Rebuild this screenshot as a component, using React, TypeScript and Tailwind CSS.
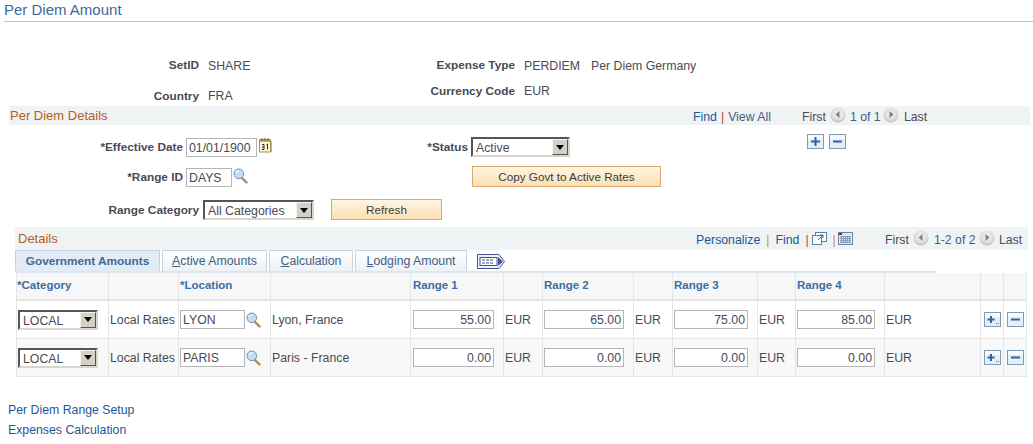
const T = "text-[#4a4a55]";
const B = "text-[11.8px] font-bold";

function Nav({ dir }: { dir: "l" | "r" }) {
  return (
    <svg width="16" height="16" viewBox="0 0 16 16" className="shrink-0">
      <defs>
        <radialGradient id={"n" + dir} cx="50%" cy="40%" r="60%">
          <stop offset="0" stopColor="#f4f4f4" />
          <stop offset="0.7" stopColor="#dddddd" />
          <stop offset="1" stopColor="#bdbdbd" />
        </radialGradient>
      </defs>
      <circle cx="8" cy="8" r="7.5" fill={"url(#n" + dir + ")"} />
      <path d={dir === "l" ? "M9.5 4v7L5.5 7.5z" : "M6.5 4v7l4-3.5z"} fill="#808080" />
    </svg>
  );
}

function Box({ kind, dots }: { kind: "+" | "-"; dots?: boolean }) {
  return (
    <svg width="17" height="15" viewBox="0 0 17 15" className="shrink-0">
      <rect x="0.5" y="0.5" width="16" height="14" fill="#e6eef5" stroke="#7e9db5" />
      <rect x="1" y="1" width="15" height="4" fill="#f7fafc" />
      {kind === "+" && <path d={dots ? "M3.5 7.5h7M7 4v7" : "M4 7.5h9M8.5 3v9"} stroke="#2b64a8" strokeWidth="2" />}
      {kind === "-" && <path d="M4 7.5h9" stroke="#2b64a8" strokeWidth="2" />}
      {dots && <path d="M12 11.5h1M14 11.5h1" stroke="#5b7f9f" />}
    </svg>
  );
}

function Search() {
  return (
    <svg width="15" height="16" viewBox="0 0 15 16" className="shrink-0">
      <path d="M8.5 9.5l5 5" stroke="#b08a50" strokeWidth="2.4" strokeLinecap="round" />
      <circle cx="5.8" cy="5.8" r="4.8" fill="#c5dcf2" stroke="#6c93b8" />
      <path d="M3 5a3 3 0 0 1 3-2.4" stroke="#ffffff" fill="none" />
    </svg>
  );
}

function Calendar() {
  return (
    <svg width="13" height="15" viewBox="0 0 13 15" className="shrink-0">
      <rect x="0.5" y="1.5" width="11" height="12.5" fill="#fff8d8" stroke="#a89250" />
      <rect x="1" y="2" width="10" height="2" fill="#c9a85a" />
      <path d="M3 0v3M6 0v3M9 0v3" stroke="#6f5c2a" />
      <path d="M12.5 3v11" stroke="#c9b377" />
      <path d="M3 6.5h2v5M3 9h2M3 11.5h2M7.5 6.5l1-.5v5.5" stroke="#303030" fill="none" strokeWidth="1" />
    </svg>
  );
}

function Select({ w, label }: { w: string; label: string }) {
  return (
    <div className={`flex h-[20px] shrink-0 items-stretch border-2 border-t-[#555] border-l-[#555] border-r-[#d8d5cc] border-b-[#d8d5cc] bg-white ${w}`}>
      <span className={`flex-1 pt-[2px] pl-[3px] text-[12.3px] leading-[14px] ${T}`}>{label}</span>
      <span className="flex w-[16px] items-center justify-center border border-b-[#555] border-r-[#555] border-t-[#f5f5f5] border-l-[#f5f5f5] bg-[#d4d0c8]">
        <svg width="8" height="5" viewBox="0 0 8 5"><path d="M0 0h8L4 5z" fill="#000" /></svg>
      </span>
    </div>
  );
}

function Input({ w, value, right }: { w: string; value: string; right?: boolean }) {
  return (
    <div className={`h-[19px] shrink-0 border border-[#b5b5b5] bg-white px-[2px] pt-[1px] text-[12.3px] leading-[16px] ${T} ${right ? "text-right" : ""} ${w}`}>
      {value}
    </div>
  );
}

function Btn({ w, label }: { w: string; label: string }) {
  return (
    <div className={`h-[21px] shrink-0 border border-[#dba86e] bg-gradient-to-b from-[#fff5e3] to-[#fbdfb4] text-center text-[11.7px] leading-[19px] text-[#3c3c3c] ${w}`}>
      {label}
    </div>
  );
}

function Sep({ c = "text-[#b5472f]" }: { c?: string }) {
  return <span className={c}>|</span>;
}

function Tab({ w, first, rest }: { w: string; first: string; rest: string }) {
  return (
    <div className={`flex h-[21px] shrink-0 items-center justify-center border border-b-0 border-[#c9d3dd] bg-gradient-to-b from-[#ffffff] to-[#edf2f7] pt-[1px] text-[12.3px] text-[#41607f] ${w}`}>
      <span className="underline">{first}</span>
      {rest}
    </div>
  );
}

function HeadCell({ children, pl = "pl-[1px]" }: { children?: React.ReactNode; pl?: string }) {
  return (
    <div className={`flex items-center border-r border-b-2 border-[#e6e6e6] bg-[#f7f7f7] pb-[1px] text-[11.5px] font-bold text-[#3a6ea5] ${pl}`}>
      {children}
    </div>
  );
}

function Row({ loc, desc, v, bg }: { loc: string; desc: string; v: string[]; bg: string }) {
  const c = `flex items-center border-r border-b border-[#e6e6e6] text-[12.3px] ${bg} ${T}`;
  const f = `${c} pl-[1px]`;
  const t = `${c} pl-[1px] pt-[1px]`;
  const b = `${c} pl-[3px]`;
  return (
    <>
      <div className={f}><Select w="w-[80px]" label="LOCAL" /></div>
      <div className={t}>Local Rates</div>
      <div className={`${f} gap-[1px]`}><Input w="w-[65px]" value={loc} /><Search /></div>
      <div className={t}>{desc}</div>
      <div className={`${c} pl-[2px]`}><Input w="w-[81px]" value={v[0]} right /></div>
      <div className={t}>EUR</div>
      <div className={f}><Input w="w-[80px]" value={v[1]} right /></div>
      <div className={t}>EUR</div>
      <div className={f}><Input w="w-[74px]" value={v[2]} right /></div>
      <div className={t}>EUR</div>
      <div className={f}><Input w="w-[78px]" value={v[3]} right /></div>
      <div className={t}>EUR</div>
      <div className={b}><Box kind="+" dots /></div>
      <div className={b}><Box kind="-" /></div>
    </>
  );
}

export default function App() {
  return (
    <div className="h-[444px] w-[1033px] overflow-hidden bg-white font-['Liberation_Sans',Arial,sans-serif] text-[12.3px]">
      <div className="ml-[4px] h-[22px] border-b border-[#c0c0c0] text-[15px] leading-[20px] text-[#3b6a9c]">Per Diem Amount</div>

      {/* Key fields */}
      <div className="mt-[34px] flex h-[20px] items-center">
        <div className={`w-[199px] text-right ${B} ${T}`}>SetID</div>
        <div className={`ml-[9px] w-[100px] ${T}`}>SHARE</div>
        <div className={`w-[207px] text-right ${B} ${T}`}>Expense Type</div>
        <div className={`ml-[9px] w-[67px] ${T}`}>PERDIEM</div>
        <div className={T}>Per Diem Germany</div>
      </div>
      <div className="mt-[5px] flex h-[25px] items-start">
        <div className={`mt-[5px] w-[199px] text-right leading-[20px] ${B} ${T}`}>Country</div>
        <div className={`mt-[5px] ml-[9px] w-[100px] leading-[20px] ${T}`}>FRA</div>
        <div className={`w-[207px] text-right leading-[20px] ${B} ${T}`}>Currency Code</div>
        <div className={`ml-[9px] leading-[20px] ${T}`}>EUR</div>
      </div>

      {/* Per Diem Details */}
      <div className="ml-[9px] flex h-[19px] w-[1021px] items-center bg-[#f0f3f4] pl-[1px]">
        <span className="w-[683px] text-[13px] text-[#b5601e]">Per Diem Details</span>
        <span className="mt-[4px] flex w-[109px] gap-[4px]">
          <span className="text-[#1f5596]">Find</span><Sep /><span className="text-[#3f5f85]">View All</span>
        </span>
        <span className={`flex items-center gap-[4px] ${T}`}>
          <span className="mt-[4px]">First</span>
          <span className="-mt-[2px]"><Nav dir="l" /></span>
          <span className="mt-[4px] w-[29px] whitespace-nowrap text-[#3f5f85]">1 of 1</span>
          <span className="-mt-[2px]"><Nav dir="r" /></span>
          <span className="mt-[4px] ml-[1px]">Last</span>
        </span>
      </div>

      <div className="mt-[9px] flex h-[24px] items-start">
        <div className={`mt-[4px] w-[183px] shrink-0 text-right leading-[19px] ${B} ${T}`}>*Effective Date</div>
        <div className="mt-[4px] ml-[3px] flex w-[85px] gap-[2px]"><Input w="w-[71px]" value="01/01/1900" /><Calendar /></div>
        <div className={`mt-[4px] w-[197px] text-right leading-[19px] ${B} ${T}`}>*Status</div>
        <div className="mt-[3px] ml-[3px]"><Select w="w-[99px]" label="Active" /></div>
        <div className="ml-[237px] flex gap-[5px]"><Box kind="+" /><Box kind="-" /></div>
      </div>
      <div className="mt-[8px] flex h-[21px] items-start">
        <div className={`mt-[2px] w-[183px] shrink-0 text-right leading-[19px] ${B} ${T}`}>*Range ID</div>
        <div className="mt-[2px] ml-[3px] flex w-[286px] gap-[1px]"><Input w="w-[46px]" value="DAYS" /><Search /></div>
        <Btn w="w-[189px]" label="Copy Govt to Active Rates" />
      </div>
      <div className="mt-[12px] flex h-[21px] items-start">
        <div className={`mt-[2px] w-[199px] shrink-0 text-right leading-[19px] ${B} ${T}`}>Range Category</div>
        <div className="mt-[1px] ml-[4px]"><Select w="w-[111px]" label="All Categories" /></div>
        <div className="ml-[17px]"><Btn w="w-[111px]" label="Refresh" /></div>
      </div>

      {/* Details */}
      <div className="mt-[7px] ml-[15px] flex h-[23px] w-[1013px] items-center bg-[#f0f3f4] pl-[3px]">
        <span className="w-[678px] text-[13px] text-[#b5601e]">Details</span>
        <span className="flex w-[189px] items-center gap-[6px] text-[#1f5596]">
          <span className="mt-[4px]">Personalize</span><span className="mt-[4px]"><Sep c="text-[#c08a3e]" /></span><span className="mt-[4px]">Find</span><span className="mt-[4px]"><Sep /></span>
          <svg width="15" height="13" viewBox="0 0 15 13" className="-mt-[1px] -ml-[3px] shrink-0" fill="none">
            <rect x="3.5" y="0.5" width="11" height="9" fill="#fff" stroke="#5f7f9f" />
            <rect x="0.5" y="3.5" width="9" height="9" fill="#fff" stroke="#5f7f9f" />
            <path d="M6 8l5-5M8 3h3v3" stroke="#40658a" />
          </svg>
          <span className="mt-[4px]"><Sep c="text-[#c08a3e]" /></span>
          <svg width="15" height="13" viewBox="0 0 15 13" className="-mt-[1px] -ml-[4px] shrink-0">
            <rect x="0.5" y="0.5" width="14" height="12" fill="#dfe6ee" stroke="#6f86a6" />
            <path d="M2 4.5h11M2 6.5h11M2 8.5h11M2 10.5h11M3.5 4v7M5.5 4v7M7.5 4v7M9.5 4v7M11.5 4v7" stroke="#8a9db5" strokeWidth="1" />
            <rect x="1" y="1" width="3" height="2" fill="#e00000" />
          </svg>
        </span>
        <span className={`flex items-center gap-[4px] ${T}`}>
          <span className="mt-[4px]">First</span>
          <span className="-mt-[2px]"><Nav dir="l" /></span>
          <span className="mt-[4px] ml-[1px] w-[41px] whitespace-nowrap text-[#3f5f85]">1-2 of 2</span>
          <span className="-mt-[2px]"><Nav dir="r" /></span>
          <span className="mt-[4px]">Last</span>
        </span>
      </div>

      <div className="ml-[15px] flex h-[23px] w-[921px] items-end gap-[2px] border-b-2 border-[#dce6f1]">
        <div className="flex h-[21px] w-[145px] shrink-0 items-center justify-center border border-b-0 border-[#c3d3e4] bg-[#e3ecf5] pt-[1px] text-[11.8px] font-bold text-[#3f6a96]">Government Amounts</div>
        <Tab w="w-[105px]" first="A" rest="ctive Amounts" />
        <Tab w="w-[84px]" first="C" rest="alculation" />
        <Tab w="w-[112px]" first="L" rest="odging Amount" />
        <svg width="28" height="15" viewBox="0 0 28 15" className="mb-[2px] ml-[8px] shrink-0">
          <path d="M0.5 0.5H22L27.5 7.5 22 14.5H0.5z" fill="#eef3fa" stroke="#42528f" />
          <rect x="3" y="3.5" width="17" height="8" fill="#fff" stroke="#42528f" />
          <path d="M5 6h12M5 9h12" stroke="#42528f" strokeDasharray="3 1" />
          <path d="M21 3l5 4.5-5 4.5z" fill="#42528f" />
        </svg>
      </div>

      <div className="ml-[16px] grid h-[104px] w-[1011px] grid-cols-[92px_70px_92px_140px_93px_39px_91px_39px_85px_38px_89px_96px_23px_23px] grid-rows-[28px_38px_38px] border-l border-[#e6e6e6]">
        <HeadCell pl="pl-0">*Category</HeadCell>
        <HeadCell />
        <HeadCell>*Location</HeadCell>
        <HeadCell />
        <HeadCell pl="pl-[2px]">Range 1</HeadCell>
        <HeadCell />
        <HeadCell>Range 2</HeadCell>
        <HeadCell />
        <HeadCell>Range 3</HeadCell>
        <HeadCell />
        <HeadCell>Range 4</HeadCell>
        <HeadCell />
        <HeadCell />
        <HeadCell />
        <Row loc="LYON" desc="Lyon, France" v={["55.00", "65.00", "75.00", "85.00"]} bg="bg-white" />
        <Row loc="PARIS" desc="Paris - France" v={["0.00", "0.00", "0.00", "0.00"]} bg="bg-[#f8f8f8]" />
      </div>

      <div className="mt-[22px] ml-[8px] pt-[1px] leading-[20px] text-[#1f5596]">
        <div>Per Diem Range Setup</div>
        <div>Expenses Calculation</div>
      </div>
    </div>
  );
}
